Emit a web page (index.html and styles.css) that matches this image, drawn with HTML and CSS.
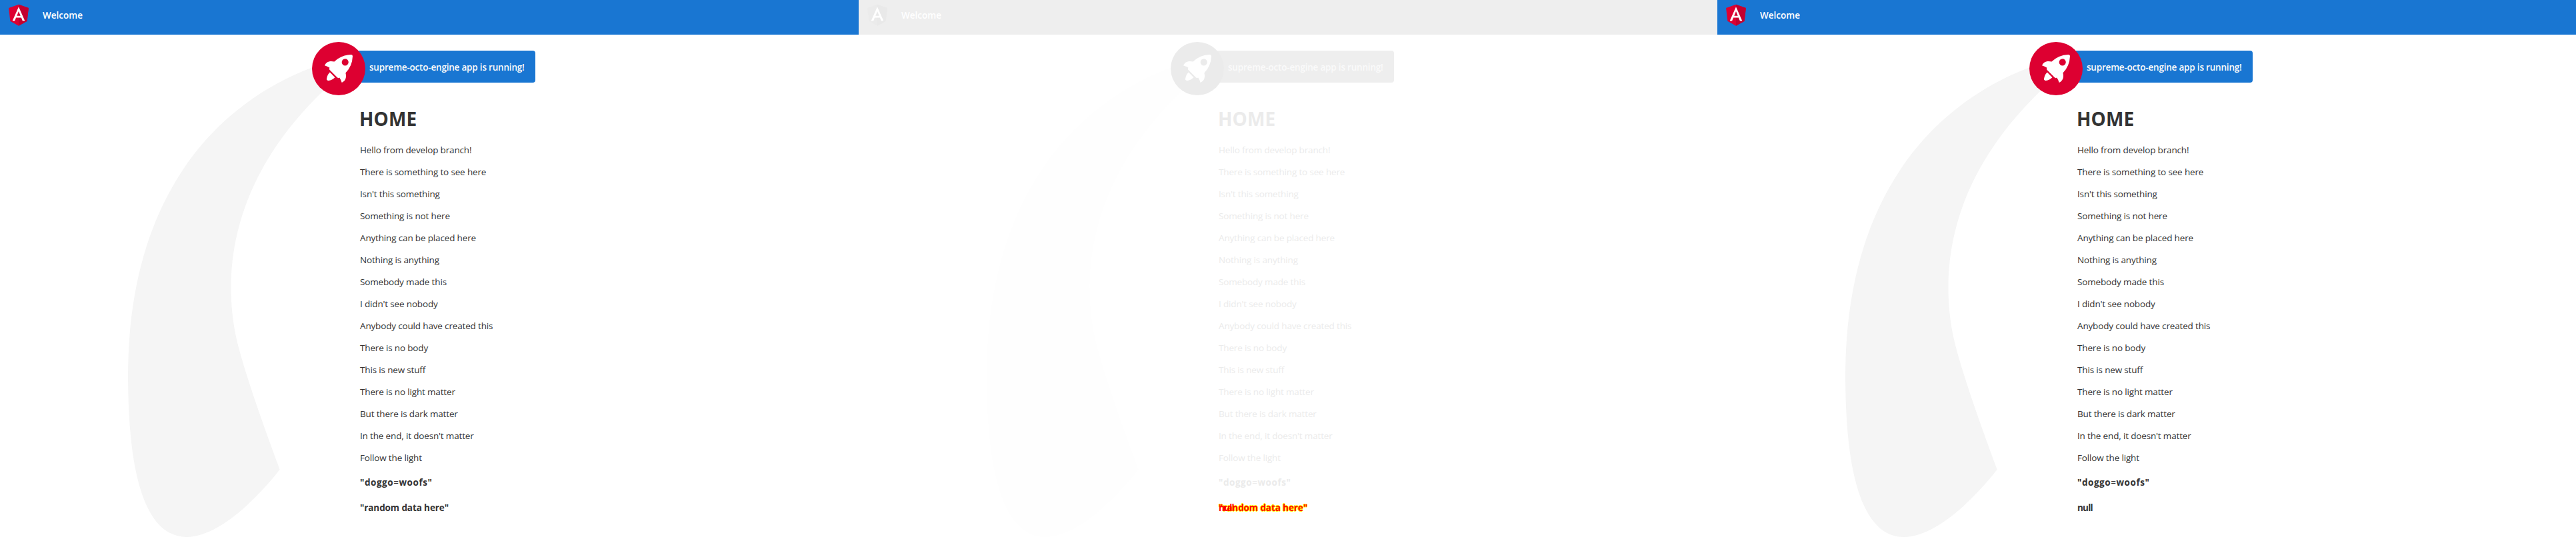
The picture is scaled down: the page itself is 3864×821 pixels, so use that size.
FILE: index.html
```html
<!DOCTYPE html>
<html lang="en">
<head>
<meta charset="utf-8">
<title>Welcome</title>
<link rel="stylesheet" href="styles.css">
</head>
<body>
<svg class="defs" aria-hidden="true">
  <symbol id="logo" viewBox="0 0 250 250">
    <path class="shield" d="M125 30L31.9 63.2l14.2 123.1L125 230l78.9-43.7 14.2-123.1z"/>
    <path class="shade" d="M125 30v22.2-.1V230l78.9-43.7 14.2-123.1L125 30z"/>
    <path fill="#fff" d="M125 52.1L66.8 182.6h21.7l11.7-29.2h49.4l11.7 29.2H183L125 52.1zm17 83.3h-34l17-40.9 17 40.9z"/>
  </symbol>
  <symbol id="rocket" viewBox="0 0 101.678 101.678">
    <circle class="disc" cx="50.839" cy="50.839" r="50.839"/>
    <g transform="translate(24.185 24.185)" fill="#fff">
      <path transform="translate(.371 3.363)" d="M3.4,42.615a3.084,3.084,0,0,0,3.553,3.553,21.419,21.419,0,0,0,12.215-6.107L9.511,30.4A21.419,21.419,0,0,0,3.4,42.615Z"/>
      <path d="M53.3,3.221A3.09,3.09,0,0,0,50.081,0,48.227,48.227,0,0,0,18.322,13.437c-6-1.666-14.991-1.221-18.322,7.218A33.892,33.892,0,0,1,9.439,25.1l-.333.666a3.013,3.013,0,0,0,.555,3.553L23.985,43.641a2.9,2.9,0,0,0,3.553.555l.666-.333A33.892,33.892,0,0,1,32.647,53.3c8.55-3.664,8.884-12.326,7.218-18.322A48.227,48.227,0,0,0,53.3,3.221ZM34.424,9.772a6.439,6.439,0,1,1,9.106,9.106,6.368,6.368,0,0,1-9.106,0A6.467,6.467,0,0,1,34.424,9.772Z"/>
    </g>
  </symbol>
  <symbol id="smoke" viewBox="0 0 516.083 1083.632">
    <path transform="translate(-147.025 -140.939)" d="M644.6,141S143.02,215.537,147.049,870.207s342.774,201.755,342.774,201.755S404.659,847.213,388.815,762.2c-27.116-145.51-11.551-384.124,271.9-609.1C671.15,139.365,644.6,141,644.6,141Z"/>
  </symbol>
</svg>

<main class="compare">
  <section class="panel">
    <header class="toolbar"><svg class="logo"><use href="#logo"/></svg><span class="welcome">Welcome</span></header>
    <div class="content">
      <svg class="smoke"><use href="#smoke"/></svg>
      <div class="card"><svg class="rocket"><use href="#rocket"/></svg><span class="running">supreme-octo-engine app is running!</span></div>
      <h1>HOME</h1>
      <p>Hello from develop branch!</p>
      <p>There is something to see here</p>
      <p>Isn't this something</p>
      <p>Something is not here</p>
      <p>Anything can be placed here</p>
      <p>Nothing is anything</p>
      <p>Somebody made this</p>
      <p>I didn't see nobody</p>
      <p>Anybody could have created this</p>
      <p>There is no body</p>
      <p>This is new stuff</p>
      <p>There is no light matter</p>
      <p>But there is dark matter</p>
      <p>In the end, it doesn't matter</p>
      <p>Follow the light</p>
      <h4 class="doggo">"doggo<span class="eq">=</span>woofs"</h4>
      <h4 class="random">"random data here"</h4>
    </div>
  </section>

  <section class="panel faded">
    <header class="toolbar"><svg class="logo"><use href="#logo"/></svg><span class="welcome">Welcome</span></header>
    <div class="content">
      <svg class="smoke"><use href="#smoke"/></svg>
      <div class="card"><svg class="rocket"><use href="#rocket"/></svg><span class="running">supreme-octo-engine app is running!</span></div>
      <h1>HOME</h1>
      <p>Hello from develop branch!</p>
      <p>There is something to see here</p>
      <p>Isn't this something</p>
      <p>Something is not here</p>
      <p>Anything can be placed here</p>
      <p>Nothing is anything</p>
      <p>Somebody made this</p>
      <p>I didn't see nobody</p>
      <p>Anybody could have created this</p>
      <p>There is no body</p>
      <p>This is new stuff</p>
      <p>There is no light matter</p>
      <p>But there is dark matter</p>
      <p>In the end, it doesn't matter</p>
      <p>Follow the light</p>
      <h4 class="doggo">"doggo<span class="eq">=</span>woofs"</h4>
      <h4 class="random changed">"random data here"<span class="over">null</span></h4>
    </div>
  </section>

  <section class="panel">
    <header class="toolbar"><svg class="logo"><use href="#logo"/></svg><span class="welcome">Welcome</span></header>
    <div class="content">
      <svg class="smoke"><use href="#smoke"/></svg>
      <div class="card"><svg class="rocket"><use href="#rocket"/></svg><span class="running">supreme-octo-engine app is running!</span></div>
      <h1>HOME</h1>
      <p>Hello from develop branch!</p>
      <p>There is something to see here</p>
      <p>Isn't this something</p>
      <p>Something is not here</p>
      <p>Anything can be placed here</p>
      <p>Nothing is anything</p>
      <p>Somebody made this</p>
      <p>I didn't see nobody</p>
      <p>Anybody could have created this</p>
      <p>There is no body</p>
      <p>This is new stuff</p>
      <p>There is no light matter</p>
      <p>But there is dark matter</p>
      <p>In the end, it doesn't matter</p>
      <p>Follow the light</p>
      <h4 class="doggo">"doggo<span class="eq">=</span>woofs"</h4>
      <h4 class="null">null</h4>
    </div>
  </section>
</main>
</body>
</html>
```
FILE: styles.css
```css
* { box-sizing: border-box; }
body {
  margin: 0;
  background: #fff;
  font-family: "Open Sans", "Noto Sans", sans-serif;
  font-size: 13.5px;
  color: #333;
}
.defs { position: absolute; width: 0; height: 0; }
.compare { display: grid; grid-template-columns: repeat(3, 1288px); height: 821px; overflow: hidden; }
.panel {
  --bar: #1976d2;
  --disc: #dd0031;
  --shade: #c3002f;
  --smoke: #f5f5f5;
  height: 821px;
  white-space: nowrap;
}
.faded {
  --bar: #eee;
  --disc: #ebebeb;
  --shade: #e9e9e9;
  --smoke: #fefefe;
  color: #ebebeb;
}
.toolbar {
  display: flex;
  align-items: flex-start;
  gap: 16px;
  height: 52px;
  padding: 2px 8px;
  background: var(--bar);
  color: #fff;
  font-weight: 600;
}
.logo { width: 40px; height: 40px; }
.shield, .disc { fill: var(--disc); }
.shade { fill: var(--shade); }
.welcome { line-height: 20px; padding-top: 11px; }
.content { position: relative; padding: 24px 0 0 540px; }
.smoke {
  position: absolute;
  left: 192px;
  top: 34px;
  width: 343px;
  height: 720px;
  fill: var(--smoke);
}
.card {
  position: relative;
  width: 325px;
  height: 48px;
  margin-left: -62px;
  padding: 15px 16px 13px 76px;
  border-radius: 4px;
  background: var(--bar);
  color: #fafafa;
  font-weight: 600;
  line-height: 20px;
  letter-spacing: -.2px;
}
.rocket { position: absolute; left: -10px; top: -13.2px; width: 80px; height: 80px; }
h1 { position: relative; margin: 35px 0 19px -1px; font-size: 28px; line-height: 38px; font-weight: 700; letter-spacing: .1px; }
p { position: relative; margin: 0; height: 33px; line-height: 19px; letter-spacing: -.16px; }
h4 { position: relative; margin: 0; height: 38px; line-height: 20px; font-size: 13.5px; font-weight: 700; }
.doggo { margin-top: 3px; letter-spacing: .55px; }
.random { letter-spacing: -.1px; }
.null, .over { letter-spacing: -.8px; }
.eq { font-weight: 400; }
.changed {
  color: #f00;
  text-shadow: 1px 0 #ff0, -1px 0 #ff0, 0 1px #ff0, 0 -1px #ff0;
}
.over { position: absolute; left: 0; top: 0; text-shadow: none; }
```
